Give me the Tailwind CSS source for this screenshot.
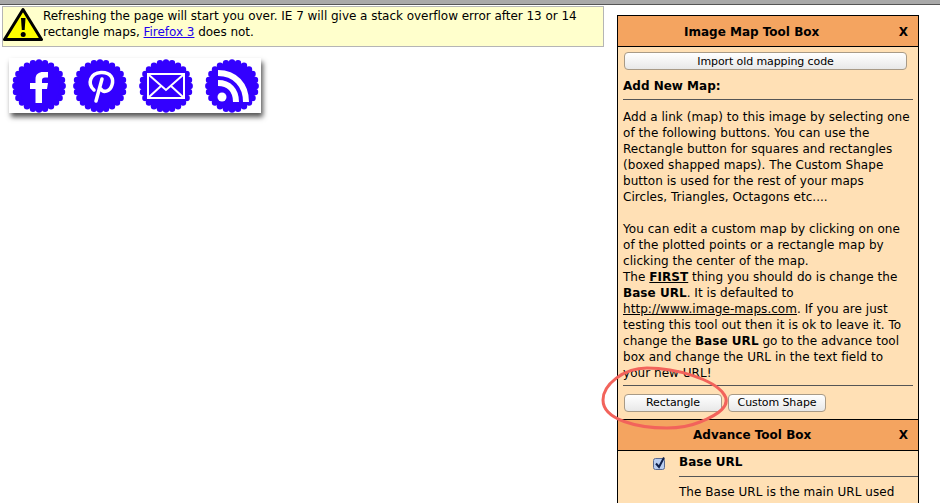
<!DOCTYPE html>
<html lang="en">
<head>
    <meta charset="UTF-8">
    <title>Image Map Tool Box</title>
    <script src="https://cdn.jsdelivr.net/npm/@tailwindcss/browser@4"></script>
</head>
<body class="relative h-[503px] w-[940px] overflow-hidden bg-white font-['DejaVu_Sans',sans-serif] text-[12px] leading-[16px] text-black">
    <div class="h-[5px] border-b border-[#555] bg-[#a9a9a9]"></div>
    <div class="flex items-start">
        <div class="ml-[2px] w-[602px] shrink-0">
            <div class="mt-[1px] flex h-[41px] border border-[#b5b5b5] bg-[#ffffcc]">
                <svg class="h-[37px] w-[40px] shrink-0" viewBox="0 0 40 37">
                    <path d="M20 2.5 L38.5 32.5 L1.5 32.5 Z" fill="#ffff00" stroke="#000" stroke-width="3" stroke-linejoin="round"/>
                    <path d="M18 11 h4.5 l-0.8 12 h-2.9 Z" fill="#000"/>
                    <circle cx="20.2" cy="27.5" r="2.5" fill="#000"/>
                </svg>
                <p class="pt-[1px] tracking-[-0.03px]">Refreshing the page will start you over. IE 7 will give a stack overflow error after 13 or 14<br>rectangle maps, <a href="#" class="text-[#2200ee] underline">Firefox 3</a> does not.</p>
            </div>
            <div class="mt-[11px] ml-[7px] flex h-[55px] w-[252px] items-center bg-white pl-[3px] shadow-[2px_4px_5px_#555]">
                <svg class="h-[54px] w-[54px] shrink-0" viewBox="0 0 54 54">
                    <g fill="#3300ff"><circle cx="27" cy="27" r="24"/><g id="s"><circle cx="27" cy="3.5" r="3.2"/><circle cx="33" cy="4.3" r="3.2"/><circle cx="39" cy="6.7" r="3.2"/><circle cx="44" cy="10.4" r="3.2"/><circle cx="47.6" cy="15" r="3.2"/><circle cx="50" cy="21" r="3.2"/><circle cx="50.7" cy="27" r="3.2"/><circle cx="50" cy="33" r="3.2"/><circle cx="47.6" cy="39" r="3.2"/><circle cx="44" cy="43.6" r="3.2"/><circle cx="39" cy="47.3" r="3.2"/><circle cx="33" cy="49.7" r="3.2"/><circle cx="27" cy="50.5" r="3.2"/><circle cx="21" cy="49.7" r="3.2"/><circle cx="15" cy="47.3" r="3.2"/><circle cx="10" cy="43.6" r="3.2"/><circle cx="6.4" cy="39" r="3.2"/><circle cx="4" cy="33" r="3.2"/><circle cx="3.3" cy="27" r="3.2"/><circle cx="4" cy="21" r="3.2"/><circle cx="6.4" cy="15" r="3.2"/><circle cx="10" cy="10.4" r="3.2"/><circle cx="15" cy="6.7" r="3.2"/><circle cx="21" cy="4.3" r="3.2"/></g></g>
                    <path d="M23.500 44 V30 H18 V24 H23.500 V20 C23.500 15 27 13 31 13 H36 V18.500 H33 C31 18.500 30 19.500 30 21 V24 H36 L35 30 H30 V44 Z" fill="#fff"/>
                </svg>
                <svg class="ml-[7px] h-[54px] w-[54px] shrink-0" viewBox="0 0 54 54">
                    <use href="#s" fill="#3300ff"/><circle cx="27" cy="27" r="24" fill="#3300ff"/>
                    <path d="M21 31 C14 25 17 14 28 13.500 C38 13 41 20 39 26 C37 33 30 34 28 30 M29 20 L23 42" fill="none" stroke="#fff" stroke-width="3.500" stroke-linecap="round"/>
                </svg>
                <svg class="ml-[12px] h-[54px] w-[54px] shrink-0" viewBox="0 0 54 54">
                    <use href="#s" fill="#3300ff"/><circle cx="27" cy="27" r="24" fill="#3300ff"/>
                    <path d="M9 15 H45 V39 H9 Z M10 16 L27 31 L44 16 M10 38 L22 27 M44 38 L32 27" fill="none" stroke="#fff" stroke-width="2"/>
                </svg>
                <svg class="ml-[12px] h-[54px] w-[54px] shrink-0" viewBox="0 0 54 54">
                    <use href="#s" fill="#3300ff"/><circle cx="27" cy="27" r="24" fill="#3300ff"/>
                    <circle cx="17" cy="38" r="4.500" fill="#fff"/>
                    <path d="M13 24 C24 24 31 31 31 43 M13 14 C30 14 41 26 41 43" fill="none" stroke="#fff" stroke-width="6"/>
                </svg>
            </div>
        </div>
        <div class="mt-[10px] ml-[13px] min-h-[488px] w-[302px] shrink-0 border-x border-black bg-[#ffe0b5]">
            <div class="flex h-[32px] items-center border-y border-black bg-[#f4a460] pt-[1px] font-bold">
                <span class="ml-[66px]">Image Map Tool Box</span>
                <span class="mr-[10px] ml-auto">X</span>
            </div>
            <div class="px-[5px] pt-[5px]">
                <button class="ml-[1px] block h-[18px] w-[283px] rounded-[4px] border border-[#a89a86] bg-gradient-to-b from-white to-[#e8e8e8] pt-[1px] text-[11px] leading-[14px] tracking-[-0.1px]">Import old mapping code</button>
                <p class="mt-[8px] font-bold">Add New Map:</p>
                <hr class="mt-[5px] mb-[9px] border-[#555]">
                <p class="tracking-[0.04px]">Add a link (map) to this image by selecting one<br>of the following buttons. You can use the<br>Rectangle button for squares and rectangles<br>(boxed shapped maps). The Custom Shape<br>button is used for the rest of your maps<br>Circles, Triangles, Octagons etc....<br><br>You can edit a custom map by clicking on one<br>of the plotted points or a rectangle map by<br>clicking the center of the map.<br>The <b class="underline">FIRST</b> thing you should do is change the<br><b>Base URL</b>. It is defaulted to<br><a href="#" class="underline">http://www.image-maps.com</a>. If you are just<br>testing this tool out then it is ok to leave it. To<br>change the <b>Base URL</b> go to the advance tool<br>box and change the URL in the text field to<br>your new URL!</p>
                <hr class="mt-[4px] border-[#555]">
                <div class="mt-[8px] flex gap-[6px]">
                    <button class="ml-[1px] h-[18px] w-[98px] rounded-[4px] border border-[#a89a86] bg-gradient-to-b from-white to-[#e8e8e8] text-[11px] leading-[16px] tracking-[-0.1px]">Rectangle</button>
                    <button class="h-[18px] w-[98px] rounded-[4px] border border-[#a89a86] bg-gradient-to-b from-white to-[#e8e8e8] text-[11px] leading-[16px] tracking-[-0.1px]">Custom Shape</button>
                </div>
            </div>
            <div class="mt-[7px] flex h-[32px] items-center border-y border-black bg-[#f4a460] font-bold">
                <span class="ml-[75px]">Advance Tool Box</span>
                <span class="mr-[10px] ml-auto">X</span>
            </div>
            <div class="flex">
                <svg class="mt-[5px] ml-[35px] h-[14px] w-[13px] shrink-0" viewBox="0 0 13 14">
                    <rect x="0.5" y="2.500" width="11" height="11" rx="2" fill="#b9cdf0" stroke="#5a6a90"/>
                    <path d="M3 7.500 L6 11 L11 1.500" fill="none" stroke="#10204a" stroke-width="2"/>
                </svg>
                <div class="ml-[13px] flex-1">
                    <p class="mt-[3px] font-bold">Base URL</p>
                    <hr class="mt-[6px] mb-[7px] border-[#555]">
                    <p class="tracking-[0.04px]">The Base URL is the main URL used</p>
                </div>
            </div>
        </div>
    </div>
    <svg class="pointer-events-none absolute top-[365px] left-[598px] h-[72px] w-[142px]" viewBox="0 0 142 72">
        <path d="M5 35 C5 20 25 3 49 3 C80 3 115 15 125 28 C135 40 120 50 102 57 C90 62 80 63 69 63 C40 63 5 55 5 35 Z" fill="none" stroke="#f2635b" stroke-width="3"/>
    </svg>
</body>
</html>
